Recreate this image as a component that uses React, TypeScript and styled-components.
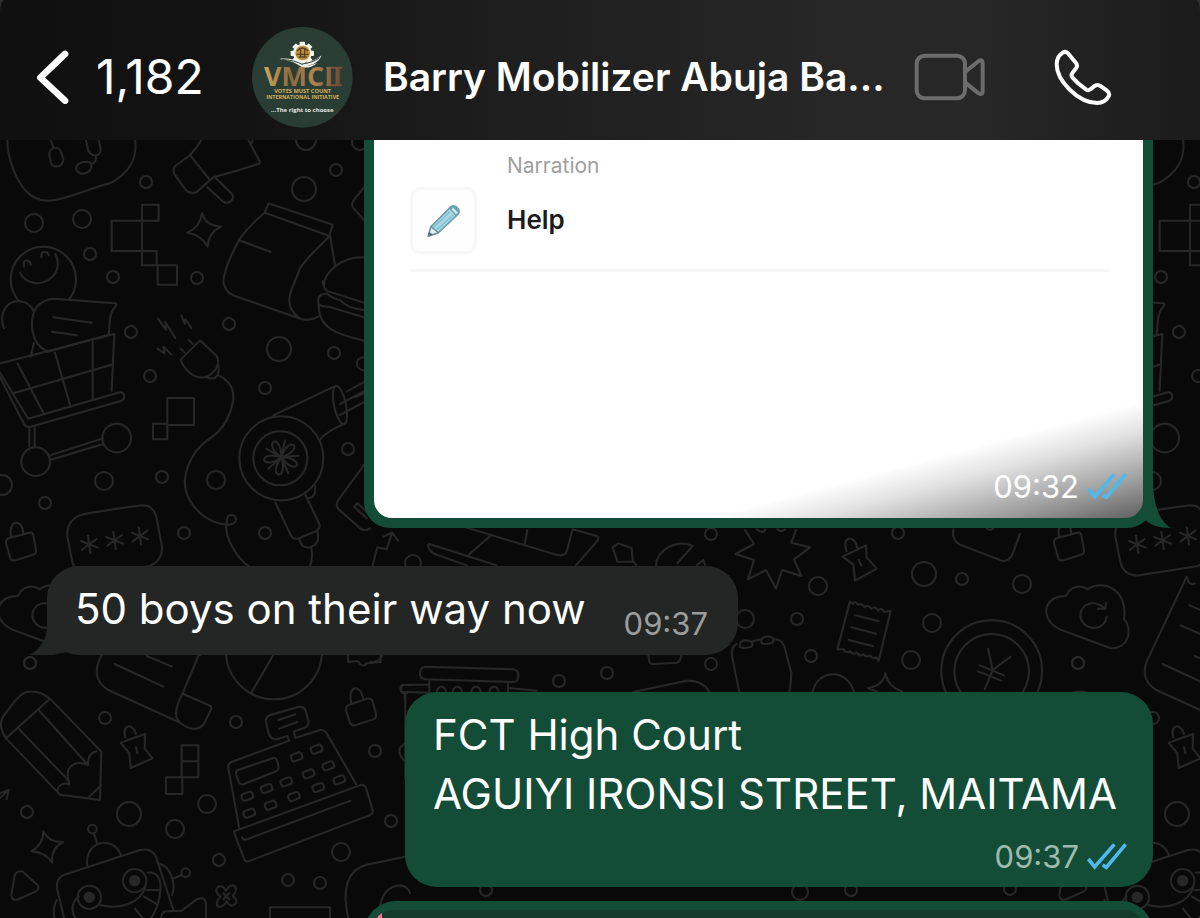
import React from "react";
import styled, { createGlobalStyle } from "styled-components";

const GlobalStyle = createGlobalStyle`
  *, *::before, *::after { box-sizing: border-box; }
  body {
    margin: 0;
    background: #090909;
    font-family: Inter, "Liberation Sans", sans-serif;
  }
`;

const Screen = styled.div`
  display: flex;
  flex-direction: column;
  height: 100vh;
  overflow: hidden;
  background: #2e2e2e;
`;

const Header = styled.header`
  flex: none;
  display: flex;
  align-items: center;
  height: 140px;
  padding: 14px 88px 0 36px;
  border-radius: 4px 4px 0 0 / 13px 13px 0 0;
  background: linear-gradient(90deg, #101010 0%, #131313 20%, #1e1e1e 42%, #272727 70%, #272727 82%, #1b1b1b 100%);
  color: #fff;
`;

const PlainButton = styled.button`
  display: flex;
  align-items: center;
  flex: none;
  padding: 0;
  border: 0;
  background: none;
  color: inherit;
  font: inherit;
  cursor: pointer;
`;

const BackButton = styled(PlainButton)`
  gap: 26px;
  width: 216px;
  font-size: 48px;
  line-height: 58px;
`;

const ProfileButton = styled(PlainButton)`
  flex: 1;
  min-width: 0;
  gap: 30px;
  text-align: left;
`;

const Title = styled.h1`
  margin: 0;
  font-size: 39px;
  font-weight: 600;
  line-height: 56px;
  white-space: nowrap;
`;

const Actions = styled.div`
  display: flex;
  align-items: center;
  gap: 68px;
`;

const Chat = styled.main`
  position: relative;
  flex: 1;
  min-height: 0;
  overflow: hidden;
  background: #090909;
`;

const Wallpaper = styled.svg`
  position: absolute;
  inset: 0;
  width: 100%;
  height: 100%;
`;

const Thread = styled.div`
  position: relative;
  display: flex;
  flex-direction: column;
  padding: 0 47px;
`;

const Bubble = styled.article<{ $mine?: boolean }>`
  position: relative;
  align-self: ${(p) => (p.$mine ? "flex-end" : "flex-start")};
  max-width: 100%;
  border-radius: 32px;
  background: ${(p) => (p.$mine ? "#144d37" : "#242626")};
  color: #fff;
`;

const PhotoBubble = styled(Bubble)`
  width: 789px;
  padding: 0 10px 10px;
  border-radius: 0 0 26px 26px;
`;

const IncomingBubble = styled(Bubble)`
  display: flex;
  align-items: flex-start;
  justify-content: space-between;
  gap: 34px;
  min-width: 691px;
  margin-top: 38px;
  padding: 13px 30px 13px 28px;
`;

const AddressBubble = styled(Bubble)`
  min-width: 748px;
  margin-top: 37px;
  padding: 13px 28px 10px;
`;

const QuoteBubble = styled(Bubble)`
  width: 789px;
  height: 120px;
  margin-top: 14px;
  padding: 9px 10px;
`;

const Quote = styled.blockquote`
  height: 100%;
  margin: 0;
  border-radius: 18px;
  background: linear-gradient(90deg, #f2728c 8px, #153c2b 8px);
`;

const Tail = styled.svg<{ $mine?: boolean }>`
  position: absolute;
  bottom: 0;
  ${(p) => (p.$mine ? "right: -18px;" : "left: -18px;")}
`;

const Photo = styled.div`
  display: flex;
  flex-direction: column;
  justify-content: space-between;
  height: 378px;
  border-radius: 0 0 18px 18px;
  background: linear-gradient(165deg, #fff 80%, #e2e2e2 85%, #979797 94%, #5e5e5e 100%);
`;

const Narration = styled.section`
  display: flex;
  align-items: flex-end;
  gap: 30px;
  margin: 0 34px 0 36px;
  padding: 10px 0 15px;
  border-bottom: 3px solid #f7f7f7;
`;

const IconTile = styled.div`
  display: flex;
  align-items: center;
  justify-content: center;
  width: 67px;
  height: 67px;
  border: 3px solid #f8f8f8;
  border-radius: 10px;
  background: #fefefe;
`;

const NarrationText = styled.div`
  display: flex;
  flex-direction: column;
  gap: 20px;
  padding-bottom: 16px;
`;

const Label = styled.span`
  color: #a0a0a0;
  font-size: 21px;
  line-height: 32px;
`;

const Value = styled.strong`
  color: #1c1c1c;
  font-size: 26px;
  font-weight: 600;
  line-height: 36px;
`;

const Text = styled.p`
  margin: 0;
  font-size: 42px;
  line-height: 59px;
`;

const Meta = styled.footer<{ $color: string; $inset?: boolean }>`
  display: flex;
  align-items: center;
  justify-content: flex-end;
  gap: 8px;
  padding: ${(p) => (p.$inset ? "0 16px 12px" : "0")};
  color: ${(p) => p.$color};
  font-size: 31px;
  line-height: 38px;
`;

const AddressMeta = styled(Meta)`
  margin: 14px -2px 0 0;
  line-height: 40px;
`;

const IncomingTime = styled(Meta)`
  align-self: flex-end;
  padding-top: 27px;
  line-height: 36px;
`;

function Ticks() {
  return (
    <svg width="40" height="28" viewBox="0 0 120 84" fill="none" stroke="#4fb8ec" strokeWidth="11" role="img" aria-label="Read">
      <path d="M4 48L23 72L82 4" />
      <path d="M47 66L58 73L116 4" />
    </svg>
  );
}

function MineTail() {
  return (
    <Tail $mine width="36" height="48" viewBox="0 0 36 48" fill="#144d37" aria-hidden="true">
      <path d="M8 0H18C18 24 24 41 36 48C24 48 15 45 8 38Z" />
    </Tail>
  );
}

function TheirTail() {
  return (
    <Tail width="44" height="44" viewBox="0 0 44 44" fill="#242626" aria-hidden="true">
      <path d="M18 0H44V40L32 42C20 46 8 45 0 44C10 40 18 28 18 16Z" />
    </Tail>
  );
}

function Logo() {
  return (
    <svg width="101" height="101" viewBox="0 0 303 303" role="img" aria-label="Group photo">
      <defs>
        <linearGradient id="gold" x1="0" x2="1">
          <stop offset="0" stopColor="#d0a558" />
          <stop offset=".35" stopColor="#8d6a3c" />
          <stop offset=".65" stopColor="#b08550" />
          <stop offset="1" stopColor="#6b4632" />
        </linearGradient>
      </defs>
      <circle cx="151" cy="151" r="151" fill="#2a3d35" />
      <g fill="#f5f2e6">
        <circle cx="151" cy="79" r="28" />
        {[0, 45, 90, 135, 180, 225, 270, 315].map((a) => (
          <rect key={a} x="143" y="44" width="16" height="14" rx="2" transform={`rotate(${a} 151 79)`} />
        ))}
      </g>
      <circle cx="152" cy="78" r="22" fill="#b98e3f" />
      <path d="M136 72c10-12 20-12 32 0M134 82h36M140 90h24M146 64v28M158 64v28" stroke="#5d4320" strokeWidth="4" fill="none" />
      <path d="M82 96c24-4 50 2 69 13 18-4 40-8 58-24-8 20-26 30-47 31 14-1 24-4 34-9-12 12-30 17-46 14-20-16-44-22-68-25Z" fill="#f1f1ea" />
      <path d="M90 98c26 0 46 6 62 15M150 111c20-2 36-8 52-18" stroke="#2a3d35" strokeWidth="3" fill="none" />
      <path d="M222 122h48M222 175h48" stroke="#75503a" strokeWidth="6" />
      <g fontFamily="'Open Sans', sans-serif" textAnchor="middle">
        <text x="153" y="178" fontSize="81" fontWeight="700" fill="url(#gold)">VMCII</text>
        <g fill="#d7b15a" fontWeight="700">
          <text x="152" y="198" fontSize="17">VOTES MUST COUNT</text>
          <text x="152" y="217" fontSize="16">INTERNATIONAL INITIATIVE</text>
        </g>
        <text x="151" y="254" fontSize="18" fontWeight="700" fill="#e4e6e2">...The right to choose</text>
      </g>
    </svg>
  );
}

type Dot = [number, number, number];

const dots: Dot[] = [
  [146, 182, 6], [34, 223, 9], [82, 219, 9], [90, 254, 6], [113, 277, 6], [197, 278, 6],
  [131, 332, 6], [229, 324, 6], [304, 189, 12], [336, 170, 6], [306, 140, 10], [279, 349, 12],
  [334, 353, 6], [150, 376, 6], [265, 388, 6], [104, 481, 9], [162, 477, 6], [216, 480, 9],
  [2, 485, 10], [45, 503, 6], [184, 533, 6], [265, 533, 6], [348, 449, 6], [360, 142, 8],
  [30, 663, 6], [105, 718, 6], [236, 722, 6], [375, 751, 6], [27, 812, 6], [129, 814, 12],
  [207, 804, 9], [175, 829, 9], [219, 860, 6], [341, 852, 9], [391, 821, 6], [288, 880, 6],
  [320, 883, 6], [413, 563, 8], [711, 534, 6], [711, 664, 6], [607, 673, 6], [559, 681, 6],
  [898, 533, 6], [818, 586, 9], [924, 574, 12], [962, 579, 6], [1022, 584, 9], [745, 619, 9],
  [797, 619, 6], [811, 656, 6], [932, 623, 9], [911, 660, 9], [1078, 663, 6], [486, 890, 6],
  [800, 892, 8], [851, 890, 6], [1010, 889, 6],
];

const keys: [number, number][] = [
  [890, 321], [950, 298], [742, 439], [800, 416], [859, 396], [926, 372], [985, 348],
  [748, 490], [812, 466], [882, 440], [955, 413], [1018, 390],
];

const stars: [number, number][] = [[268, 583], [344, 571], [420, 558]];

function Doodles() {
  return (
    <g id="doodles" fill="none" stroke="#272727" strokeWidth="2" strokeLinecap="round" strokeLinejoin="round">
      {dots.map(([x, y, r]) => (
        <circle key={`${x}-${y}`} cx={x} cy={y} r={r} />
      ))}

      {/* game pad, ice lolly, blocks, sparkle, paper bag, burger */}
      <g transform="translate(0 140) scale(.33333)" strokeWidth="6">
        <path d="M22 0C22 60 50 120 75 150Q110 190 165 180C220 170 270 145 330 130C380 105 415 60 405 0" />
        <path d="M152 0L160 22M148 45C145 20 178 15 184 38L190 58C188 84 158 86 152 66ZM258 0L265 32C275 50 300 52 302 30L296 0M288 48Q290 68 273 72M258 66C280 62 278 92 260 98C242 108 224 92 230 78Q238 64 258 66" />
        <path d="M604 0Q590 25 570 45L526 78Q516 90 524 104L556 148Q570 165 590 156L640 112L700 95L775 72Q782 70 778 62L745 0M570 45L628 118M622 142L668 184Q680 192 692 184Q704 174 696 162L648 115M745 0Q756 18 758 0" />
        <path d="M426 194H476V242H426ZM335 242H426V333H335ZM426 242V333M426 333H470V376H426ZM473 376H531V434H473Z" />
        <path d="M606 220Q616 258 664 260Q626 276 623 320Q604 284 562 278Q600 262 606 220Z" />
        <path d="M806 190L998 254L988 288L794 218ZM794 218C760 245 720 290 712 310C680 370 665 420 672 434Q680 460 705 468L900 536Q930 545 955 530M988 288C960 320 900 370 896 395C880 440 865 460 868 485Q870 515 900 536M990 288L1005 375M716 300L812 336" />
        <path d="M972 440C970 400 1020 350 1092 352M968 424Q970 448 985 454L1092 488M975 462Q950 462 956 490Q960 500 985 500L1092 532M956 495C955 560 1000 580 1092 602M980 460Q1000 478 1020 480Q1040 505 1092 510" />
        <path d="M1092 142L1060 182Q1052 195 1062 206L1092 240" />
        <circle cx="130" cy="418" r="98" />
        <path d="M60 398C75 430 115 438 145 420C175 400 180 370 166 342M72 380Q68 360 82 362Q92 364 92 374M124 352Q122 334 136 336Q146 338 146 346" />
      </g>

      {/* shopping cart with its goods */}
      <g transform="translate(0 140) scale(.33333)" strokeWidth="6">
        <path fill="#090909" d="M12 565C-6 520 20 482 58 484Q90 486 102 516M142 635C90 610 86 540 110 500Q130 478 160 476L345 490Q352 492 346 500Q332 515 330 540L326 584Z" />
        <path d="M160 532L275 548M156 575L230 586M102 608L92 650" />
      </g>
      <g transform="translate(0 350) scale(.33333)" strokeWidth="6">
        <path d="M-20 45L60 25L343 -48L335 122M-10 62L72 222Q78 234 92 230L365 152Q376 146 372 134Q368 124 354 128L85 206L0 68M165 8L210 164M52 40L130 188M278 -25V145M40 130L335 44M88 232V288M104 230V292M150 316L308 265M150 330L310 282" />
        <circle cx="107" cy="335" r="43" />
        <circle cx="350" cy="264" r="43" />
      </g>

      {/* plug and cord, hair dryer, lock, pin code */}
      <g transform="translate(0 350) scale(.33333)" strokeWidth="6">
        <path d="M474 -94L498 -60L496 -84L526 -36M544 -104L554 -78L556 -92L574 -66M472 -4L494 10L490 -10L514 14M566 -30L578 -18M542 -4L554 8M600 -29L545 26Q540 32 546 40C570 80 600 90 625 78C650 62 660 40 650 18Z" />
        <path d="M618 80Q625 88 644 84Q660 76 655 44M655 76C710 100 710 150 680 210C650 270 610 260 575 325C540 390 550 440 600 490C650 530 710 535 708 505C704 490 680 490 680 515C670 570 720 630 745 648" />
        <path d="M502 144H582V225H502ZM459 221H502V268H459Z" />
        <circle cx="844" cy="325" r="126" />
        <circle cx="841" cy="325" r="81" />
        <path d="M820 196L1002 110M960 270Q970 250 1035 220" />
        <ellipse cx="1020" cy="165" rx="18" ry="58" transform="rotate(-12 1020 165)" />
        <path d="M1020 162L1100 120M1020 195L1100 152M1040 125L1100 92M1066 142L1100 126" />
        <path d="M826 458L872 555Q880 570 896 565L945 545Q964 535 958 522L916 434M898 566Q902 596 930 592Q962 584 952 544M934 594Q940 620 930 648M945 408Q950 440 928 444" />
        {[-20, 52, 124, 196, 268].map((a) => (
          <path key={a} d="M844 322C826 296 826 274 838 270C852 272 854 294 844 322M844 322L872 278" transform={`rotate(${a} 844 322)`} />
        ))}
        <path d="M1092 345L1015 450Q1005 465 1016 478L1080 535Q1095 545 1110 535M1062 470L1072 460L1105 490M1062 470L1100 505M1092 22C1065 22 1062 55 1092 62" />
        <path d="M18 580Q16 568 28 564L88 548Q98 546 100 556L108 600Q110 610 100 614L46 631Q34 634 31 624ZM34 562C22 510 66 502 70 550" />
        <path d="M202 560Q198 515 238 496Q260 488 415 467Q460 460 470 505L486 590Q488 630 450 648L275 676Q230 680 218 640Z" />
        {stars.map(([x, y]) => (
          <path key={x} d={`M${x - 4} ${y - 26}L${x + 3} ${y + 26}M${x - 25} ${y - 10}L${x + 25} ${y + 10}M${x - 22} ${y + 16}L${x + 22} ${y - 16}`} />
        ))}
      </g>

      {/* scroll, ball, pencil, push pin, cash register, robot */}
      <g transform="translate(0 650) scale(.33333)" strokeWidth="6">
        <path d="M416 -220L296 35Q276 90 325 120L540 218M595 18L548 130Q510 200 545 222C580 246 600 236 612 222L634 176Q636 170 628 166L550 132M344 42L490 110M440 18L516 50M416 -220Q424 -190 440 -200M425 -134L620 -50M398 -74L600 15" />
        <circle cx="822" cy="4" r="144" />
        <path d="M820 14L754 128" />
        <path d="M1044 16V36L1066 34Q1076 32 1080 42Q1092 52 1100 40L1142 36V16" />
        <path d="M18 265Q-8 225 10 200C30 170 60 130 80 126Q115 118 150 146L304 305L300 450L180 434L18 265L150 146M56 236L208 394M116 180L264 345M180 434Q166 424 178 408Q192 396 208 404Q200 380 205 360Q222 328 264 345Q262 310 290 304M266 442L304 405" />
        <path d="M376 262C364 220 400 220 408 252M362 278L435 252L434 296L458 325L392 354L388 310ZM408 292L412 310" />
        <path d="M545 286H595V334H545ZM545 334H595V382H545ZM498 382H547V432H498Z" />
        <path d="M718 535L684 350Q684 340 694 336L868 272M868 272L862 258L830 268Q812 268 806 250L798 215Q796 202 808 196L895 171Q910 168 916 180L926 215Q926 228 912 234L882 244L886 264L960 240Q974 238 980 250L1068 402M702 544L1085 404Q1094 404 1098 414L1118 480Q1120 492 1108 496L745 634Q734 636 732 626L703 550ZM726 562Q730 572 740 568L1052 452M835 210L886 193M838 236L892 216" />
        <path d="M714 360L820 324Q830 322 832 334L836 350Q836 360 828 364L732 402Q720 406 716 396L708 372Q706 364 714 360Z" />
        {keys.map(([x, y]) => (
          <rect key={`${x}-${y}`} x={x - 17} y={y - 11} width="34" height="21" rx="8" transform={`rotate(-20 ${x} ${y})`} />
        ))}
        <path d="M1038 180Q1038 168 1048 164L1102 146Q1114 144 1118 154L1128 192Q1130 204 1120 208L1064 226Q1054 228 1050 218ZM1054 160C1040 110 1080 95 1090 148" />
        <path d="M0 430L26 420L20 448M26 420L0 444" />
        <path d="M130 544Q144 576 190 576Q154 592 156 638Q136 606 94 604Q130 584 130 544Z" />
        <path d="M60 664Q50 664 44 676L34 735Q34 750 50 750L108 724Q120 714 112 704L72 668Q66 662 60 664Z" />
        <circle cx="277" cy="537" r="13" />
        <circle cx="557" cy="668" r="13" />
        <path d="M282 550L292 582M262 648C252 570 340 555 362 614M196 820L172 720Q166 690 188 676L420 600Q455 592 468 620L520 780M480 642C510 650 530 700 516 735M520 686L544 675M170 750Q155 780 165 810" />
        <circle cx="268" cy="742" r="35" />
        <circle cx="404" cy="692" r="35" />
        <circle cx="268" cy="742" r="14" fill="#272727" />
        <circle cx="404" cy="692" r="14" fill="#272727" />
        <path d="M236 740C210 760 214 790 230 810M300 765C360 780 420 760 436 712M444 668C500 660 486 760 450 810M440 720H480M432 740L470 762M405 776L428 804" />
        <path d="M485 810Q480 785 500 784L545 782L590 748Q618 736 618 765V810" />
        <path d="M654 710Q668 704 678 722Q690 700 704 708Q714 720 698 738Q716 752 706 762Q690 774 680 754Q668 776 652 768Q646 756 662 740Q640 724 654 710ZM670 730L688 748M688 730L670 748" />
        <path d="M810 810V772H990V810M1046 810C1025 720 1040 660 1100 644L1240 615M1140 770Q1150 710 1200 706Q1225 710 1230 730" />
        <path d="M1230 105H1205Q1196 118 1210 130H1222M1216 130V390M1216 280Q1180 300 1216 335" />
      </g>

      {/* laptop, plant and temple parts between the bubbles */}
      <g transform="translate(370 520) scale(.33333)" strokeWidth="6">
        <path d="M8 136L22 82L50 88L66 40M40 50L66 38L84 62M280 20L565 106Q585 108 590 95L608 28L680 48Q688 52 684 60L618 136M365 44L296 104M472 30L464 74M178 72Q170 76 180 90Q186 100 200 104L290 136M178 72L380 136" />
        <path d="M728 82L745 70L785 84L788 125H742ZM858 136C860 90 920 55 968 78L922 130M980 136L1000 120L1006 136M790 125L800 136" />
        <path d="M0 426Q30 430 38 404M835 404L838 424Q840 434 852 432L920 428Q932 426 934 404M165 440L430 448Q444 450 445 465Q446 486 430 486L165 478Q148 474 150 458Q152 442 165 440ZM178 480V520M414 486V520M175 494H105Q86 500 94 515L180 518M104 520V540M415 504L500 512" />
        {[214, 262, 318, 372].map((x) => (
          <path key={x} d={`M${x - 14} 520Q${x - 14} 500 ${x} 500Q${x + 14} 500 ${x + 14} 520`} />
        ))}
        <path d="M790 516L950 482Q1000 480 1018 516" />
      </g>

      {/* burst, pin, receipt, coin, cloud, bag */}
      <g transform="translate(730 520) scale(.33333)" strokeWidth="6">
        <path d="M45 30L72 72L16 102L72 120L54 178L108 150L138 206L156 150L214 168L192 118L240 82L184 68L198 30M80 28Q100 44 106 28M142 28Q155 38 165 28" />
        <path d="M350 94C332 48 376 42 382 84M338 110L408 76L410 112L440 146L375 182L370 134ZM386 120L394 136" />
        <path d="M670 28Q664 60 690 74L815 122Q835 126 846 106L870 42M770 26L780 30L790 26" />
        <path d="M360 244L368 252Q376 240 384 254Q396 248 404 262Q414 252 424 266Q436 256 444 272Q456 260 462 276L482 272L446 422L438 412Q428 420 420 406Q408 414 400 402Q390 412 380 398Q370 406 360 394Q348 402 340 388L322 388ZM376 286L446 304M364 322L438 341M356 360L430 379" />
        <circle cx="785" cy="452" r="151" />
        <circle cx="785" cy="454" r="112" />
        <path d="M774 386L788 450L842 410M788 450L764 508M750 436L822 466M744 454L814 482" />
        <path d="M1008 228C1020 196 1055 194 1072 208C1120 175 1195 210 1182 296C1210 330 1195 390 1140 384L990 328C930 300 935 228 1008 228ZM1120 262C1080 230 1040 265 1054 300C1070 335 1125 330 1130 290M1104 266H1126L1128 248" />
        <path d="M20 372Q2 380 6 410L28 516M68 364L92 358M134 358Q160 358 166 390L184 460Q182 500 178 516M30 372Q34 358 56 362Q74 366 64 380Q40 388 30 380ZM94 362Q96 348 120 350Q136 354 128 368Q104 376 94 368ZM248 516C260 450 350 440 372 516M466 460Q474 500 516 514M466 460Q460 496 414 504L440 514" />
      </g>
    </g>
  );
}

function ChatWallpaper() {
  return (
    <Wallpaper aria-hidden="true">
      <defs>
        <pattern id="wallpaper" y="-140" width="1048" height="1200" patternUnits="userSpaceOnUse">
          <Doodles />
          <use href="#doodles" x="1048" />
          <use href="#doodles" x="-1048" />
        </pattern>
      </defs>
      <rect width="100%" height="100%" fill="url(#wallpaper)" />
    </Wallpaper>
  );
}

export default function App() {
  return (
    <Screen>
      <GlobalStyle />
      <Header>
        <BackButton aria-label="Back, 1,182 unread">
          <svg width="34" height="54" viewBox="0 0 102 162" fill="none" stroke="#fff" strokeWidth="20" strokeLinecap="round" strokeLinejoin="round" aria-hidden="true">
            <path d="M87 12L13 83L87 152" />
          </svg>
          1,182
        </BackButton>
        <ProfileButton>
          <Logo />
          <Title>Barry Mobilizer Abuja Ba...</Title>
        </ProfileButton>
        <Actions>
          <PlainButton aria-label="Video call">
            <svg width="72" height="48" viewBox="0 0 216 144" fill="none" stroke="#6c6c6c" strokeWidth="12" strokeLinejoin="round" aria-hidden="true">
              <rect x="8" y="8" width="145" height="128" rx="24" />
              <path d="M153 57L194 24Q206 18 206 31V115Q206 127 194 121L153 88" />
            </svg>
          </PlainButton>
          <PlainButton aria-label="Voice call">
            <svg width="58" height="56" viewBox="0 0 174 168" fill="none" stroke="#fff" strokeWidth="12" strokeLinejoin="round" aria-hidden="true">
              <path d="M26 11Q35 5 43 14L66 42Q72 50 66 58L55 72Q50 78 55 85C66 98 82 112 97 122Q103 126 109 121L123 110Q130 106 138 110L158 124Q169 132 164 142C156 156 145 162 130 162C72 162 8 95 8 46C8 28 14 18 26 11Z" />
            </svg>
          </PlainButton>
        </Actions>
      </Header>
      <Chat>
        <ChatWallpaper />
        <Thread>
          <PhotoBubble $mine>
            <MineTail />
            <Photo>
              <Narration>
                <IconTile>
                  <svg width="34" height="34" viewBox="0 0 102 102" strokeLinejoin="round" aria-hidden="true">
                    <path d="M4 96L12 68L72 8Q80 2 90 10Q100 20 94 30L34 86Z" fill="#a9d8e6" stroke="#6d9dab" strokeWidth="5" />
                    <path d="M66 14Q80 2 90 10Q100 20 94 30L86 36Z" fill="#6ba4b8" />
                    <path d="M76 14L90 28" stroke="#d3ebf2" strokeWidth="7" />
                    <path d="M18 72L68 24M26 80L80 32" stroke="#7fbed1" strokeWidth="4" />
                    <path d="M4 96L12 68L34 86Z" fill="#e8f0f1" stroke="#6d8b92" strokeWidth="4" />
                    <path d="M4 96L7 84L16 91Z" fill="#4d6166" />
                  </svg>
                </IconTile>
                <NarrationText>
                  <Label>Narration</Label>
                  <Value>Help</Value>
                </NarrationText>
              </Narration>
              <Meta $color="#fff" $inset>
                <time>09:32</time>
                <Ticks />
              </Meta>
            </Photo>
          </PhotoBubble>

          <IncomingBubble>
            <TheirTail />
            <Text>50 boys on their way now</Text>
            <IncomingTime $color="#9c9d9d">
              <time>09:37</time>
            </IncomingTime>
          </IncomingBubble>

          <AddressBubble $mine>
            <Text>
              FCT High Court
              <br />
              AGUIYI IRONSI STREET, MAITAMA
            </Text>
            <AddressMeta $color="#9dbbaf">
              <time>09:37</time>
              <Ticks />
            </AddressMeta>
          </AddressBubble>

          <QuoteBubble $mine>
            <Quote />
          </QuoteBubble>
        </Thread>
      </Chat>
    </Screen>
  );
}
